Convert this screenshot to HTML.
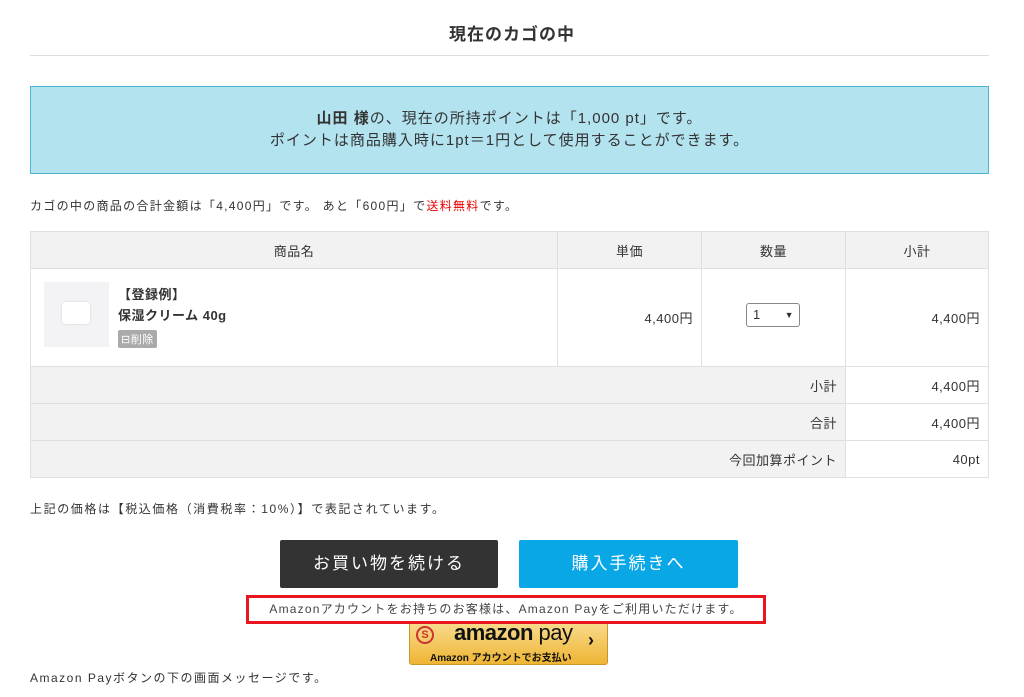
<!DOCTYPE html><html><head><meta charset="utf-8"><style>
body{margin:0;width:1024px;height:697px;background:#fff;font-family:"Liberation Sans","Noto Sans CJK JP",sans-serif;color:#333;position:relative;overflow:hidden}
.a{position:absolute}
table{border-collapse:collapse;position:absolute;left:30px;top:231px;width:959px;font-size:13px;letter-spacing:0.5px}
td{border:1px solid #e0e0e0;padding:0 8px}
.g{background:#f2f2f2}
</style></head><body>
<div class="a" style="left:0;width:1024px;top:20px;text-align:center;font-size:17px;font-weight:bold;color:#333;letter-spacing:1px">現在のカゴの中</div>
<div class="a" style="left:30px;width:959px;top:55px;border-top:1px solid #ddd"></div>
<div class="a" style="left:30px;top:86px;width:959px;background:#b2e3ef;border:1px solid #4eb5cf;text-align:center;font-size:15px;line-height:22px;padding-top:21px;box-sizing:border-box;height:88px;letter-spacing:1px"><b>山田 様</b>の、現在の所持ポイントは「1,000 pt」です。<br>ポイントは商品購入時に1pt＝1円として使用することができます。</div>
<div class="a" style="left:30px;top:197px;font-size:12px;letter-spacing:1.3px">カゴの中の商品の合計金額は「4,400円」です。 あと「600円」で<span style="color:#e00">送料無料</span>です。</div>
<table>
<tr class="g" style="height:37px;text-align:center"><td style="width:510px">商品名</td><td style="width:127px">単価</td><td style="width:127px">数量</td><td>小計</td></tr>
<tr style="height:98px"><td style="position:relative"><div class="a" style="left:13px;top:13px;width:65px;height:65px;background:#f3f3f6"><div class="a" style="left:18px;top:20px;width:28px;height:22px;background:#fff;border-radius:3px;box-shadow:0 0 2px #ccc"></div></div><div class="a" style="left:87px;top:15px;font-weight:bold;line-height:21px">【登録例】<br>保湿クリーム 40g</div><div class="a" style="left:87px;top:61px;background:#aaa;color:#fff;font-size:11px;padding:1px 3px;border-radius:2px">⊟削除</div></td><td style="text-align:right">4,400円</td><td style="position:relative"><div class="a" style="left:44px;top:34px;width:54px;height:24px;border:1px solid #888;border-radius:3px;box-sizing:border-box;font-size:13px;line-height:22px;padding-left:6px">1<span style="position:absolute;right:5px;font-size:9px">▼</span></div></td><td style="text-align:right">4,400円</td></tr>
<tr class="g" style="height:37px"><td colspan="3" style="text-align:right">小計</td><td style="text-align:right;background:#fff">4,400円</td></tr>
<tr class="g" style="height:37px"><td colspan="3" style="text-align:right">合計</td><td style="text-align:right;background:#fff">4,400円</td></tr>
<tr class="g" style="height:37px"><td colspan="3" style="text-align:right">今回加算ポイント</td><td style="text-align:right;background:#fff">40pt</td></tr>
</table>
<div class="a" style="left:30px;top:500px;font-size:12px;letter-spacing:1.6px">上記の価格は【税込価格（消費税率：10%）】で表記されています。</div>
<div class="a" style="left:280px;top:540px;width:218px;height:48px;background:#333;color:#fff;font-size:17px;text-align:center;line-height:48px;border-radius:2px;letter-spacing:2px">お買い物を続ける</div>
<div class="a" style="left:519px;top:540px;width:219px;height:48px;background:#09a7e6;color:#fff;font-size:17px;text-align:center;line-height:48px;border-radius:2px;letter-spacing:2px">購入手続きへ</div>
<div class="a" style="left:409px;top:620px;width:199px;height:45px;background:linear-gradient(#f8dc90,#efb534);border:1px solid #c9962a;border-radius:3px;box-sizing:border-box">
<div class="a" style="left:6px;top:5px;width:14px;height:14px;border:2px solid #c33;border-radius:50%;color:#c33;font-size:11px;text-align:center;line-height:14px;font-weight:bold">S</div>
<div class="a" style="left:44px;top:-1px;font-size:22px;font-weight:bold;color:#111;letter-spacing:-0.5px">amazon <span style="font-weight:normal">pay</span></div>
<div class="a" style="left:20px;top:28px;font-size:10px;font-weight:bold;color:#111">Amazon アカウントでお支払い</div>
<div class="a" style="left:178px;top:9px;font-size:18px;font-weight:bold;color:#111">›</div></div>
<div class="a" style="left:246px;top:595px;width:520px;height:29px;border:3px solid #e8141e;box-sizing:border-box;background:#fff;text-align:center;font-size:12px;line-height:23px;color:#444;letter-spacing:1.2px">Amazonアカウントをお持ちのお客様は、Amazon Payをご利用いただけます。</div>
<div class="a" style="left:30px;top:669px;font-size:12px;letter-spacing:1.5px">Amazon Payボタンの下の画面メッセージです。</div>
</body></html>
